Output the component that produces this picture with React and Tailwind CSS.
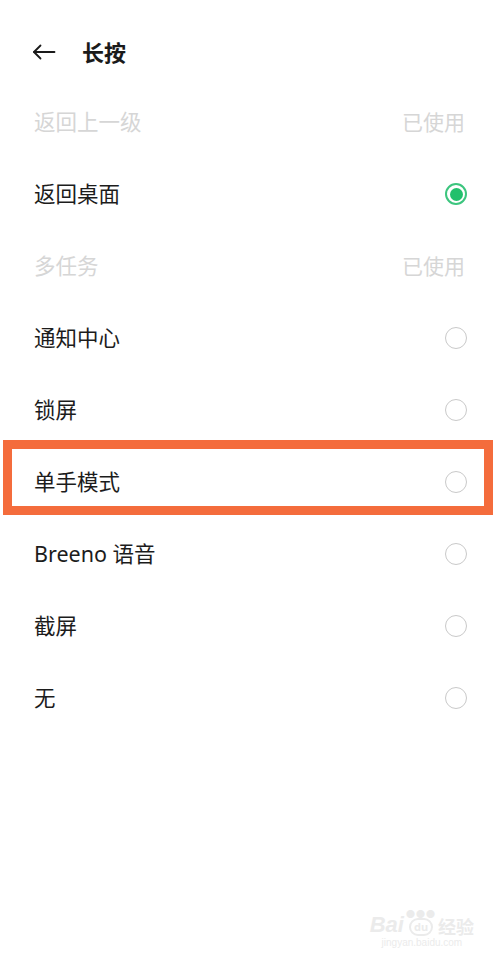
import React from "react";

const rows = [
  { label: "返回上一级", state: "used" },
  { label: "返回桌面", state: "checked" },
  { label: "多任务", state: "used" },
  { label: "通知中心", state: "off" },
  { label: "锁屏", state: "off" },
  { label: "单手模式", state: "off", highlight: true },
  { label: "Breeno 语音", state: "off" },
  { label: "截屏", state: "off" },
  { label: "无", state: "off" },
];

function Radio({ checked }) {
  if (checked) {
    return (
      <div className="w-[22px] h-[22px] rounded-full border-[2px] border-[#3cc57e] flex items-center justify-center">
        <div className="w-[13px] h-[13px] rounded-full bg-[#22c06c]" />
      </div>
    );
  }
  return <div className="w-[22px] h-[22px] rounded-full border-[1.5px] border-[#c9c9c9]" />;
}

export default function App() {
  return (
    <div
      className="relative w-[500px] h-[964px] bg-white overflow-hidden"
      style={{ fontFamily: '"Noto Sans", "Noto Sans CJK SC", sans-serif' }}
    >
      <div className="h-[86px] pt-[36px] pl-[32px]">
        <div className="flex items-center h-8">
          <svg width="24" height="16" viewBox="0 0 24 16" fill="none" stroke="#1a1a1a" strokeWidth="1.8" strokeLinecap="round" strokeLinejoin="round">
            <path d="M22.5 8H2" />
            <path d="M8.5 1.5L2 8l6.5 6.5" />
          </svg>
          <span className="ml-[26px] text-[22px] font-bold text-[#1a1a1a] leading-none">长按</span>
        </div>
      </div>
      {rows.map((r) => (
        <div key={r.label} className="relative h-[72px] flex items-center justify-between pl-[34px] pr-[33px]">
          <span className={`text-[21.5px] leading-none ${r.state === "used" ? "text-[#d6d6d6]" : "text-[#1c1c1c]"}`}>
            {r.label}
          </span>
          {r.state === "used" ? (
            <span className="text-[21px] leading-none text-[#d6d6d6] mr-[2px]">已使用</span>
          ) : (
            <Radio checked={r.state === "checked"} />
          )}
          {r.highlight && (
            <div className="absolute left-[3px] right-[7px] top-[-6px] h-[75px] border-[9px] border-[#f46c3c] pointer-events-none" />
          )}
        </div>
      ))}
      <div className="absolute right-[26px] bottom-[14px] flex flex-col items-center text-[#ebebeb]">
        <div className="flex items-end leading-none">
          <span className="text-[22px] font-bold italic" style={{ fontFamily: '"Liberation Sans", sans-serif' }}>Bai</span>
          <span className="relative mx-[2px] flex flex-col items-center">
            <span className="text-[9px] leading-none tracking-[1px]">●●●</span>
            <span className="rounded-full border-2 border-[#ebebeb] px-[3px] text-[11px] font-bold leading-[14px]">du</span>
          </span>
          <span className="text-[18px] font-bold">经验</span>
        </div>
        <span className="text-[10px] leading-[14px]" style={{ fontFamily: '"Liberation Sans", sans-serif' }}>jingyan.baidu.com</span>
      </div>
    </div>
  );
}
